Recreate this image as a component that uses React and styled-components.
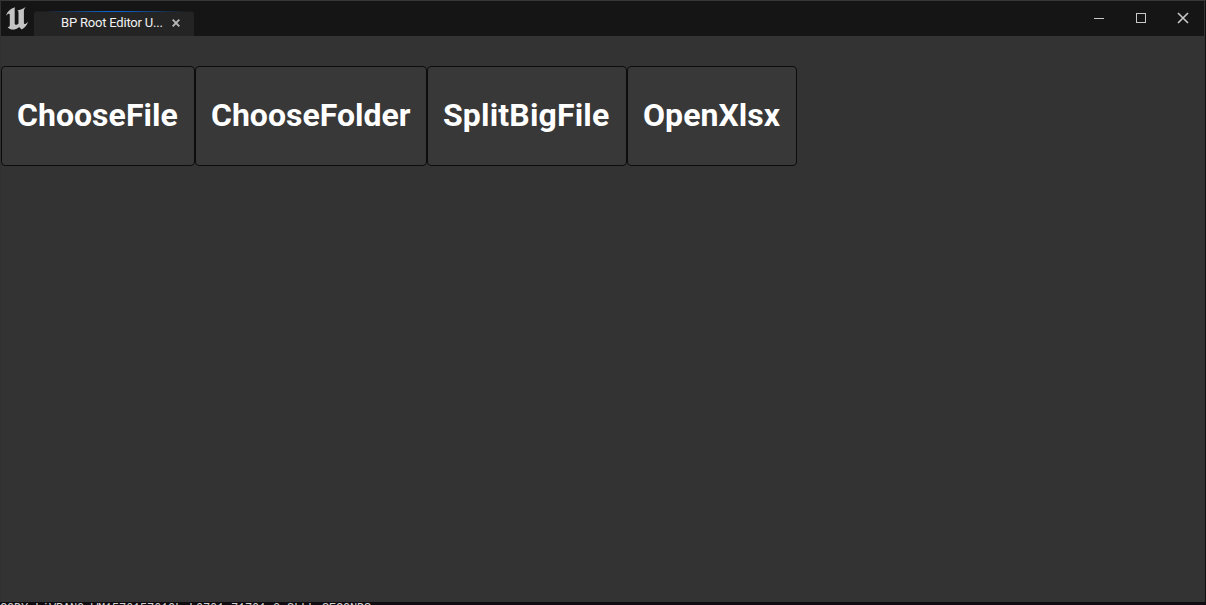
import React from 'react';
import styled, { createGlobalStyle } from 'styled-components';

const GlobalStyle = createGlobalStyle`
  * { box-sizing: border-box; }
  body { margin: 0; background: #333; overflow: hidden; }
`;

const Window = styled.div`
  display: flex;
  flex-direction: column;
  width: 1206px;
  height: 605px;
  background: #333;
  font-family: Roboto, sans-serif;
  overflow: hidden;
`;

const Frame = styled.div`
  display: flex;
  flex-direction: column;
  height: 602px;
  border-top: 1px solid #383838;
  border-left: 1px solid #303030;
  border-right: 1px solid #101010;
`;

const TitleBar = styled.header`
  display: flex;
  height: 35px;
  flex: none;
  margin-right: 1px;
  background: #151515;
`;

const Logo = styled.svg`
  width: 24px;
  height: 24px;
  margin: 5px 5px 0 4px;
  fill: #c4c4c4;
`;

const Tab = styled.div`
  display: flex;
  flex-direction: column;
  width: 160px;
  height: 25px;
  margin-top: 10px;
  border-radius: 4px 4px 0 0;
  background: #242424;
  overflow: hidden;
`;

const TabHighlight = styled.div`
  flex: none;
  height: 1px;
  background: linear-gradient(90deg, #1c1c1c 6%, #0c62cc 45%, #0c62cc 55%, #1c1c1c 94%);
`;

const TabContent = styled.div`
  display: flex;
  align-items: center;
  flex: 1;
  padding: 0 13px 3px 27px;
`;

const TabLabel = styled.span`
  flex: 1;
  color: #f2f2f2;
  font-size: 13px;
  line-height: 16px;
  letter-spacing: -0.2px;
  white-space: nowrap;
`;

const TabClose = styled.svg`
  width: 10px;
  height: 10px;
  stroke: #b8b8b8;
  stroke-width: 1.9;
`;

const Controls = styled.div`
  display: flex;
  margin-left: auto;
`;

const Control = styled.svg`
  width: 42px;
  height: 35px;
  fill: none;
  stroke: #c8c8c8;
  stroke-width: ${(p) => p.$weight || 1};
`;

const Toolbar = styled.main`
  display: flex;
  padding-top: 30px;
`;

const ActionButton = styled.button`
  width: ${(p) => p.$width}px;
  height: 100px;
  padding: 0 0 2px 15px;
  border: 1px solid #0c0c0c;
  border-radius: 4px;
  background: #383838;
  color: #fff;
  font: 700 32px/38px Roboto, sans-serif;
  letter-spacing: ${(p) => p.$tracking}px;
  text-align: left;
`;

const LogStrip = styled.footer`
  height: 3px;
  overflow: hidden;
  background: #100c12;
  color: #d0d0d0;
  font: 12px/15px "Liberation Mono", monospace;
  letter-spacing: -0.2px;
  white-space: pre;
`;

const actions = [
  ['ChooseFile', 194, 0.03],
  ['ChooseFolder', 232, 0],
  ['SplitBigFile', 200, 0.17],
  ['OpenXlsx', 170, 0.05],
];

export default function App() {
  return (
    <>
      <GlobalStyle />
      <Window>
        <Frame>
          <TitleBar>
            <Logo viewBox="0 0 24 24">
              <path d="M1 9.8C2.2 5.4 5.2 2.6 10.2 1.2C9.5 2.3 9.7 3.2 9.7 4.7V17.2C9.7 18.3 10.7 18.9 11.7 18.7C12.5 18.5 13.1 17.9 13.5 17.4V6.4C13.5 5.3 13 4.8 12 4.8C15 4 18 2.7 20.7 1C19.3 2.6 18.9 3.8 18.9 5.2V16.4C18.9 17.7 19.5 18.3 20.2 18C21.4 17.5 22.4 16.6 23.2 15.5C22 19.5 19.4 22.2 16.6 23.6L14.1 21.1C12.6 22.8 10.4 23.8 8 23.6C5.4 23.4 3.4 22.3 2.6 20.9C4.1 21.1 4.8 20.6 4.8 19V8.7C4.8 7.2 2.9 7.2 1 9.8Z" />
            </Logo>
            <Tab>
              <TabHighlight />
              <TabContent>
                <TabLabel>BP Root Editor U...</TabLabel>
                <TabClose viewBox="0 0 10 10"><path d="M1.7 1.7L8.3 8.3M8.3 1.7L1.7 8.3" /></TabClose>
              </TabContent>
            </Tab>
            <Controls>
              <Control><path d="M16 17.5H26" /></Control>
              <Control><rect x="16.5" y="12.5" width="9" height="9" /></Control>
              <Control $weight={1.6}><path d="M16 12L26 22M26 12L16 22" /></Control>
            </Controls>
          </TitleBar>
          <Toolbar>
            {actions.map(([label, width, tracking]) => (
              <ActionButton key={label} $width={width} $tracking={tracking}>{label}</ActionButton>
            ))}
          </Toolbar>
        </Frame>
        <LogStrip>
          CODY.LiVPANO.WM1576157610L.L0701.71701.2.SLLL.SECONDS
        </LogStrip>
      </Window>
    </>
  );
}
